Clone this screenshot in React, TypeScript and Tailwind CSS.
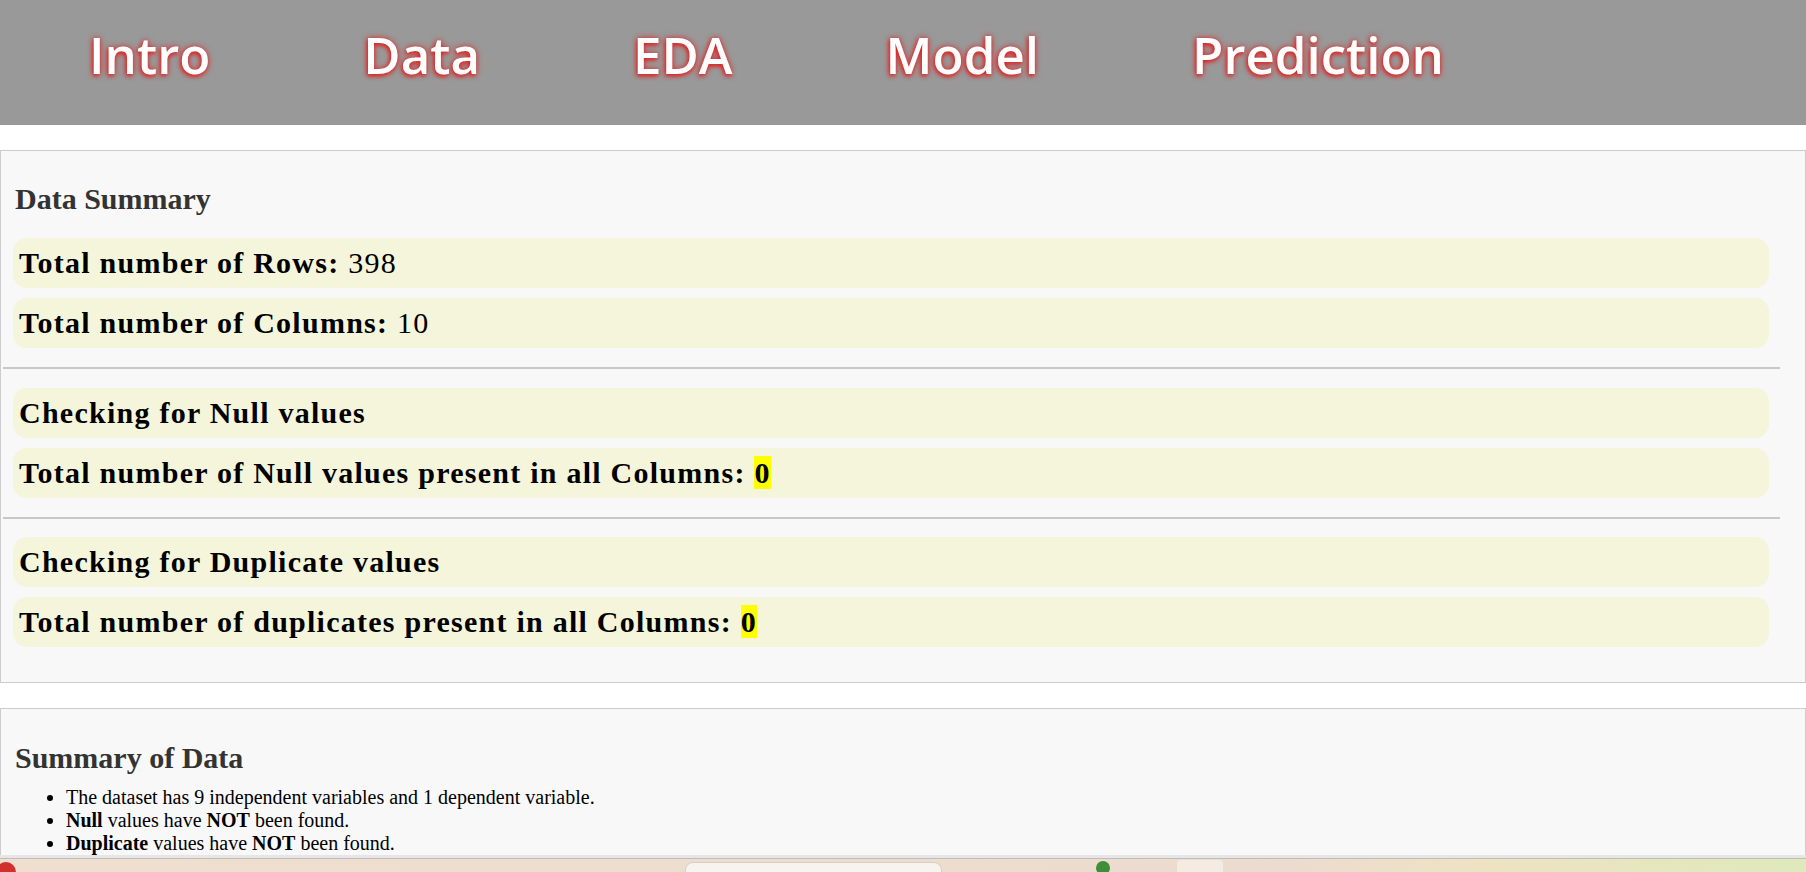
const navItems = ["Intro", "Data", "EDA", "Model", "Prediction"];

function Row({ children }: { children: React.ReactNode }) {
  return (
    <div className="ml-[12px] mr-[36px] rounded-[14px] bg-[#f5f5dc] py-[8px] pl-[6px] text-[30px] font-bold leading-[34px] tracking-[1.25px] text-black">
      {children}
    </div>
  );
}

function Zero() {
  return <span className="bg-[#ffff00]">0</span>;
}

function Divider({ className = "" }: { className?: string }) {
  return <hr className={`ml-[2px] mr-[25px] h-0 border-0 border-t-2 border-[#c8c8c8] ${className}`} />;
}

export default function App() {
  return (
    <div className="flex h-screen flex-col overflow-hidden bg-white font-['Liberation_Serif',serif]">
      <div className="h-[855px] shrink-0 overflow-hidden">
        <nav className="flex h-[125px] items-start gap-[153px] bg-[#999999] pl-[89px] pt-[29px]">
          {navItems.map((item) => (
            <a
              key={item}
              href="#"
              className="font-['Open_Sans',sans-serif] text-[51px] font-semibold leading-none text-white [text-shadow:-1px_2px_4px_#e02020,0_0_6px_#d63030]"
            >
              {item}
            </a>
          ))}
        </nav>

        <section className="mt-[25px] border border-[#cccccc] bg-[#f8f8f8] pb-[35px] pt-[31px]">
          <h3 className="px-[14px] text-[30px] font-bold leading-[34px] text-[#333333]">Data Summary</h3>
          <div className="mt-[22px] flex flex-col gap-[10px]">
            <Row>
              Total number of Rows: <span className="font-normal">398</span>
            </Row>
            <Row>
              Total number of Columns: <span className="font-normal">10</span>
            </Row>
          </div>
          <Divider className="mt-[19px]" />
          <div className="mt-[19px] flex flex-col gap-[10px]">
            <Row>Checking for Null values</Row>
            <Row>
              Total number of Null values present in all Columns: <Zero />
            </Row>
          </div>
          <Divider className="mt-[19px]" />
          <div className="mt-[18px] flex flex-col gap-[10px]">
            <Row>Checking for Duplicate values</Row>
            <Row>
              Total number of duplicates present in all Columns: <Zero />
            </Row>
          </div>
        </section>

        <section className="mt-[25px] border border-[#cccccc] bg-[#f8f8f8] px-[14px] pb-[20px] pt-[32px]">
          <h3 className="text-[30px] font-bold leading-[34px] text-[#333333]">Summary of Data</h3>
          <ul className="mt-[11px] list-disc pl-[51px] text-[20px] leading-[23px] text-black">
            <li>The dataset has 9 independent variables and 1 dependent variable.</li>
            <li>
              <b>Null</b> values have <b>NOT</b> been found.
            </li>
            <li>
              <b>Duplicate</b> values have <b>NOT</b> been found.
            </li>
          </ul>
        </section>
      </div>

      <div className="h-[3px] shrink-0 bg-[#e6e6e6]" />
      <div className="h-px shrink-0 bg-[#bdbdbd]" />
      <div className="relative flex-1 overflow-hidden bg-[linear-gradient(90deg,#efdfcf_0%,#ecdccf_72%,#ede3c2_82%,#dfe9bb_100%)]">
        <div className="absolute -left-[4px] top-[3px] h-[20px] w-[20px] rounded-full bg-[#d0312d]" />
        <div className="absolute left-[685px] top-[3px] h-[20px] w-[257px] rounded-[8px] border border-[#d8cfc4] bg-[#f7f3ee]" />
        <div className="absolute left-[1096px] top-[2px] h-[14px] w-[14px] rounded-full bg-[#3f8f3a]" />
        <div className="absolute left-[1177px] top-[1px] h-[20px] w-[46px] rounded-[4px] bg-[#f4ebe3]" />
      </div>
    </div>
  );
}
